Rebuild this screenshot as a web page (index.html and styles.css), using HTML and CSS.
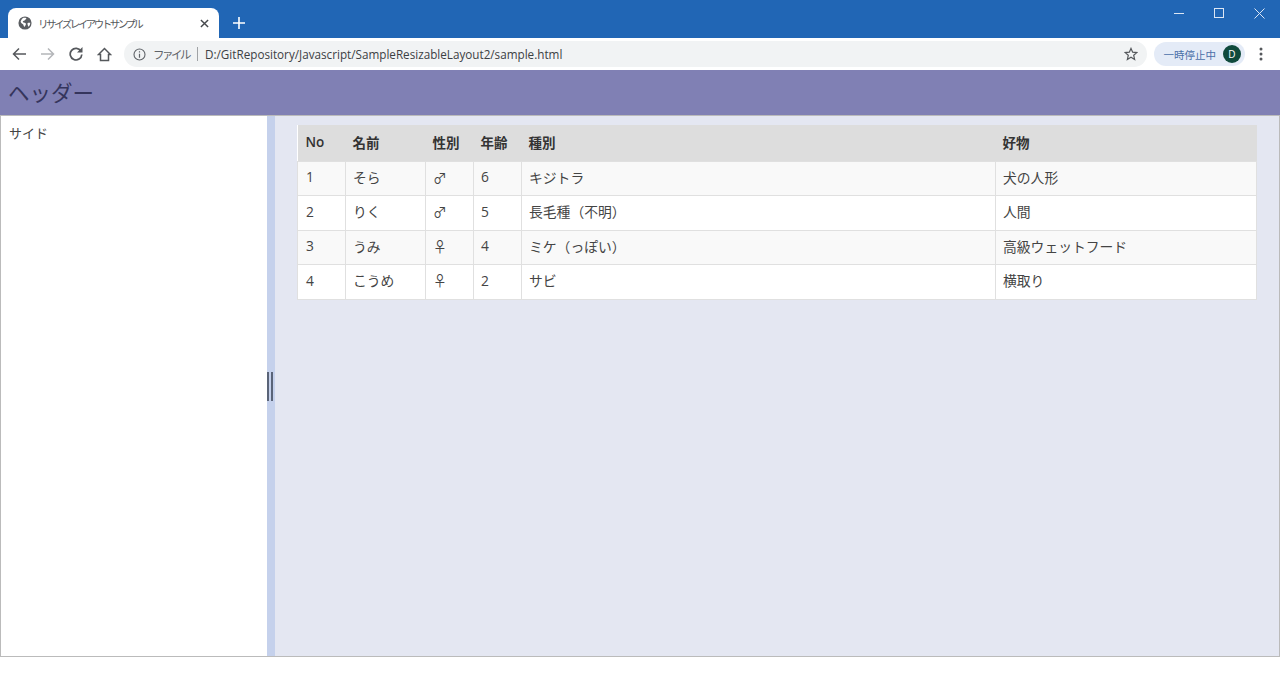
FILE: index.html
```html
<!DOCTYPE html>
<html lang="ja">
<head>
  <meta charset="UTF-8">
  <meta name="viewport" content="width=device-width, initial-scale=1.0">
  <title>リサイズレイアウトサンプル</title>
  <link rel="stylesheet" href="styles.css">
</head>
<body>
  <!-- Browser tab strip -->
  <div class="tabstrip">
    <div class="tab">
      <svg class="favicon" width="14" height="14" viewBox="0 0 16 16">
        <circle cx="8" cy="8" r="7.500" fill="#5a5d61"/>
        <path d="M5 2.500c1.500-.5 3.500-.8 4.500 0 .3 1-1 1.300-1.500 2-.5.8-2 .8-2.500 1.800-.3 1 1 1.200 2 1.400 1 .3 1.800.8 1.500 2-.3 1-1 2-1.800 3-.7-1-.8-2-1.200-3-.8-.5-2.500-1.500-3-3 .3-1.500 1-3 2.500-4.200zM11 8c1-.5 2.500-.5 3-.2 0 1.700-.6 3.300-1.800 4.500-.8-.8-1.700-3-1.200-4.300z" fill="#fff"/>
      </svg>
      <span class="tab-title">リサイズレイアウトサンプル</span>
      <svg class="tab-close" width="9" height="9" viewBox="0 0 10 10">
        <path d="M1 1l8 8M9 1l-8 8" stroke="#45484c" stroke-width="1.600"/>
      </svg>
    </div>
    <svg class="newtab" width="12" height="12" viewBox="0 0 12 12">
      <path d="M6 0v12M0 6h12" stroke="#fff" stroke-width="1.600"/>
    </svg>
    <div class="window-buttons">
      <svg width="10" height="10" viewBox="0 0 10 10"><path d="M0 5.500h10" stroke="#dce6f4" stroke-width="1"/></svg>
      <svg width="10" height="10" viewBox="0 0 10 10"><rect x=".5" y=".5" width="9" height="9" fill="none" stroke="#dce6f4" stroke-width="1"/></svg>
      <svg width="11" height="11" viewBox="0 0 11 11"><path d="M.5.500l10 10M10.500.500l-10 10" stroke="#dce6f4" stroke-width="1"/></svg>
    </div>
  </div>

  <!-- Browser toolbar -->
  <div class="toolbar">
    <svg class="tool-back" width="14" height="14" viewBox="0 0 14 14"><path d="M14 7H1.500M7 1.500L1.500 7 7 12.500" fill="none" stroke="#55585c" stroke-width="1.500"/></svg>
    <svg class="tool-forward" width="14" height="14" viewBox="0 0 14 14"><path d="M0 7h12.500M7 1.500L12.500 7 7 12.500" fill="none" stroke="#b4b6b9" stroke-width="1.500"/></svg>
    <svg class="tool-reload" width="14" height="14" viewBox="0 0 14 14"><path d="M12 4.200A5.800 5.800 0 1 0 12.800 7.500" fill="none" stroke="#55585c" stroke-width="1.700"/><path d="M13.500 0v5.500H8z" fill="#55585c"/></svg>
    <svg class="tool-home" width="15" height="15" viewBox="0 0 15 15"><path d="M7.500 1.500L1.500 7.500h2v6h8v-6h2z" fill="none" stroke="#55585c" stroke-width="1.500" stroke-linejoin="miter"/></svg>
    <div class="omnibox">
      <svg class="info-icon" width="13" height="13" viewBox="0 0 13 13">
        <circle cx="6.500" cy="6.500" r="5.500" fill="none" stroke="#5f6368" stroke-width="1.100"/>
        <path d="M6.500 5.700v4M6.500 3.200v1.300" stroke="#5f6368" stroke-width="1.200"/>
      </svg>
      <span class="scheme">ファイル</span>
      <span class="scheme-sep"></span>
      <span class="url">D:/GitRepository/Javascript/SampleResizableLayout2/sample.html</span>
      <svg class="star" width="14" height="14" viewBox="0 0 15 15">
        <path d="M7.500 1.500l1.800 4.100 4.400.4-3.300 2.900 1 4.400-3.900-2.300-3.900 2.300 1-4.400L1.300 6l4.400-.4z" fill="none" stroke="#55585c" stroke-width="1.300"/>
      </svg>
    </div>
    <div class="profile">
      <span class="profile-text">一時停止中</span>
      <span class="avatar">D</span>
    </div>
    <svg class="menu" width="4" height="14" viewBox="0 0 4 14">
      <circle cx="2" cy="2" r="1.500" fill="#55585c"/><circle cx="2" cy="7" r="1.500" fill="#55585c"/><circle cx="2" cy="12" r="1.500" fill="#55585c"/>
    </svg>
  </div>

  <!-- Page -->
  <div class="page">
    <header class="page-header">ヘッダー</header>
    <div class="layout">
      <aside class="side">サイド</aside>
      <div class="splitter"><div class="grip"></div></div>
      <main class="content">
        <table class="cats">
          <thead>
            <tr>
              <th class="col-no">No</th>
              <th class="col-name">名前</th>
              <th class="col-sex">性別</th>
              <th class="col-age">年齢</th>
              <th class="col-kind">種別</th>
              <th>好物</th>
            </tr>
          </thead>
          <tbody>
            <tr><td>1</td><td>そら</td><td>♂</td><td>6</td><td>キジトラ</td><td>犬の人形</td></tr>
            <tr><td>2</td><td>りく</td><td>♂</td><td>5</td><td>長毛種（不明）</td><td>人間</td></tr>
            <tr><td>3</td><td>うみ</td><td>♀</td><td>4</td><td>ミケ（っぽい）</td><td>高級ウェットフード</td></tr>
            <tr><td>4</td><td>こうめ</td><td>♀</td><td>2</td><td>サビ</td><td>横取り</td></tr>
          </tbody>
        </table>
      </main>
    </div>
  </div>
</body>
</html>
```

FILE: styles.css
```css
body {
  margin: 0;
  height: 673px;
  overflow: hidden;
  background: #fff;
  font-family: "Open Sans", "Noto Sans CJK JP", sans-serif;
  color: #333;
}

/* tab strip */
.tabstrip {
  display: flex;
  align-items: flex-end;
  height: 38px;
  padding-left: 8px;
  background: #2166b5;
}

.tab {
  display: flex;
  align-items: center;
  width: 211px;
  height: 30px;
  box-sizing: border-box;
  padding: 0 10px;
  background: #fff;
  border-radius: 8px 8px 0 0;
}

.tab-title {
  flex: 1;
  margin-left: 6px;
  font-size: 10.500px;
  letter-spacing: -2.500px;
  color: #55585c;
}

.newtab {
  margin: 0 0 9px 14px;
}

.window-buttons {
  display: flex;
  align-self: flex-start;
  align-items: center;
  gap: 30px;
  margin-left: auto;
  padding-right: 15px;
  height: 26px;
}

/* toolbar */
.toolbar {
  display: flex;
  align-items: center;
  height: 30px;
  box-sizing: border-box;
  padding: 2px 0 0 12px;
  background: #fff;
}

.tool-forward {
  margin-left: 15px;
}

.tool-reload {
  margin-left: 14px;
}

.tool-home {
  margin-left: 14px;
}

.omnibox {
  display: flex;
  align-items: center;
  flex: 1;
  height: 26px;
  margin-left: 12px;
  padding: 0 9px;
  background: #f1f3f4;
  border-radius: 13px;
}

.scheme {
  margin-left: 7px;
  font-size: 11.500px;
  letter-spacing: -2.500px;
  color: #5f6368;
}

.scheme-sep {
  width: 1px;
  height: 14px;
  margin: 0 7px 0 8px;
  background: #a0a3a6;
}

.url {
  flex: 1;
  font-size: 11.700px;
  color: #3c4043;
}

.profile {
  display: flex;
  align-items: center;
  height: 24px;
  margin-left: 7px;
  padding: 0 4px 0 10px;
  background: #e4ebf7;
  border-radius: 12px;
}

.profile-text {
  font-size: 10.500px;
  color: #4a6fa8;
}

.avatar {
  width: 18px;
  height: 18px;
  margin-left: 7px;
  border-radius: 50%;
  background: #0f4a3c;
  color: #fff;
  font-size: 10px;
  line-height: 18px;
  text-align: center;
}

.menu {
  margin: 0 17px 0 14px;
}

/* page */
.page {
  display: flex;
  flex-direction: column;
  height: 587px;
  margin-top: 2px;
}

.page-header {
  flex: none;
  height: 45px;
  padding-left: 8px;
  background: #8080b4;
  color: #35355c;
  font-size: 21.500px;
  line-height: 45px;
}

.layout {
  display: flex;
  flex: 1;
  border: 1px solid #bbb;
}

.side {
  flex: none;
  width: 266px;
  box-sizing: border-box;
  padding: 7px 8px;
  background: #fff;
  color: #444;
  font-size: 13px;
  line-height: 20px;
}

.splitter {
  display: flex;
  flex: none;
  align-items: center;
  width: 8px;
  background: #c5d1ec;
}

.grip {
  width: 6px;
  height: 29px;
  box-sizing: border-box;
  border-left: 2px solid #5a6478;
  border-right: 2px solid #5a6478;
}

.content {
  flex: 1;
  padding: 9px 22px 0;
  background: #e4e7f2;
}

/* table */
.cats {
  width: 100%;
  border-collapse: collapse;
  table-layout: fixed;
  background: #fff;
  font-size: 14px;
}

.cats th {
  box-sizing: border-box;
  height: 36px;
  padding: 0 7px 2px;
  background: #ddd;
  text-align: left;
  font-weight: 600;
  font-size: 13.500px;
}

.cats td {
  box-sizing: border-box;
  height: 34.500px;
  padding: 0 7px 3px;
  border: 1px solid #e0e0e0;
  color: #444;
  font-size: 13.800px;
}

.cats th:first-child,
.cats td:first-child {
  padding-left: 8px;
}

.cats tbody tr:nth-child(odd) {
  background: #f9f9f9;
}

.col-no {
  width: 48px;
}

.col-name {
  width: 80px;
}

.col-sex {
  width: 48px;
}

.col-age {
  width: 48px;
}

.col-kind {
  width: 474px;
}
```
